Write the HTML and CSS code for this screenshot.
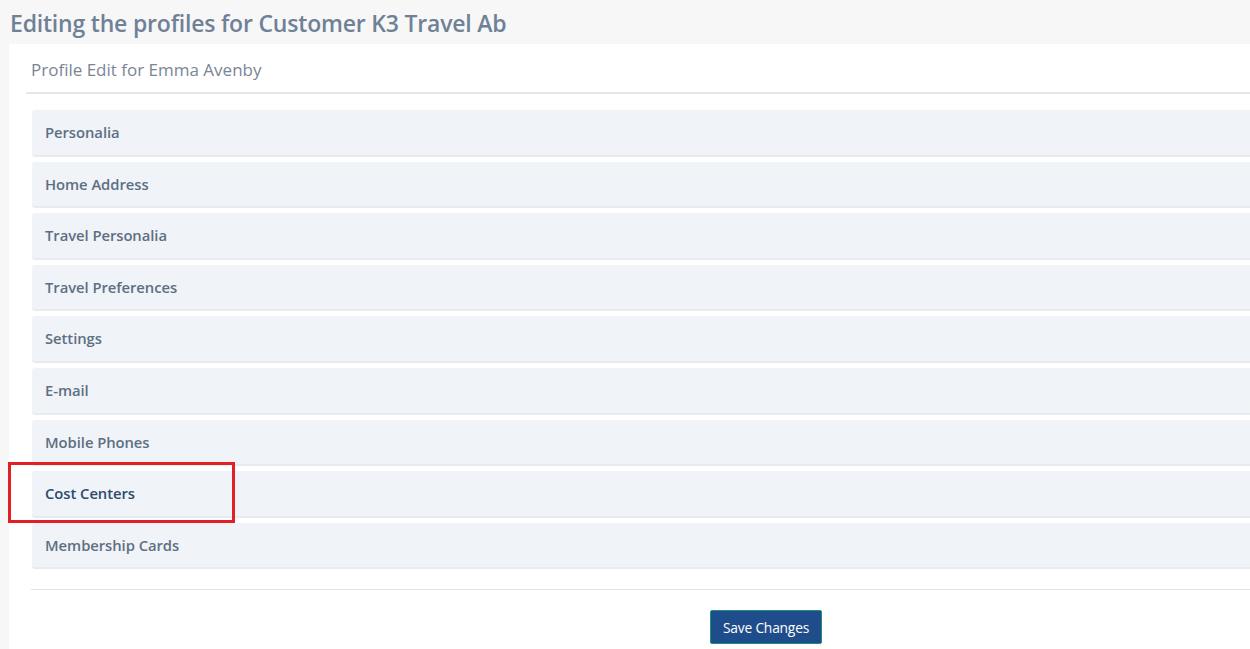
FILE: index.html
```html
<!DOCTYPE html>
<html>
<head>
<meta charset="utf-8">
<link rel="stylesheet" href="styles.css">
</head>
<body>
<div class="page">
  <h1 class="title">Editing the profiles for Customer K3 Travel Ab</h1>
  <div class="panel">
    <div class="panel-head">Profile Edit for Emma Avenby</div>
    <div class="sections">
      <div class="row">Personalia</div>
      <div class="row">Home Address</div>
      <div class="row">Travel Personalia</div>
      <div class="row">Travel Preferences</div>
      <div class="row">Settings</div>
      <div class="row">E-mail</div>
      <div class="row">Mobile Phones</div>
      <div class="row active">Cost Centers</div>
      <div class="row">Membership Cards</div>
    </div>
    <div class="footer">
      <button class="save">Save Changes</button>
    </div>
  </div>
  <div class="highlight"></div>
</div>
</body>
</html>
```
FILE: styles.css
```css
html, body {
  margin: 0;
  padding: 0;
  background: #f7f7f7;
  overflow: hidden;
}
.page {
  position: relative;
  width: 1250px;
  height: 649px;
  overflow: hidden;
  font-family: "Open Sans", "Noto Sans", sans-serif;
}
.title {
  margin: 0;
  height: 44px;
  box-sizing: border-box;
  padding: 6px 0 0 10px;
  font-size: 23px;
  font-weight: 600;
  color: #6f8196;
  letter-spacing: -0.2px;
  line-height: 34px;
  white-space: nowrap;
}
.panel {
  margin-left: 9px;
  background: #ffffff;
  height: 605px;
  width: 1600px;
  padding: 0 0 0 17px;
}
.panel-head {
  height: 50px;
  box-sizing: border-box;
  border-bottom: 2px solid #e4e8ed;
  padding: 14px 0 0 5px;
  font-size: 17px;
  color: #7a8594;
  line-height: 24px;
}
.sections {
  padding: 16px 0 0 6px;
}
.row {
  height: 44.6px;
  box-sizing: content-box;
  margin-bottom: 5px;
  background: #f0f3f7;
  border-bottom: 2px solid #e7eaee;
  border-radius: 3px 0 0 3px;
  padding-left: 13px;
  font-size: 14.8px;
  font-weight: 600;
  color: #5d6f84;
  line-height: 45px;
  letter-spacing: -0.05px;
}
.row.active {
  color: #2d4b6c;
}
.footer {
  margin: 20px 0 0 5px;
  border-top: 1px solid #e2e2e2;
  padding-top: 20px;
  display: flex;
  justify-content: center;
  width: 1470px;
}
.save {
  width: 112px;
  height: 34px;
  background: #1f4d8b;
  border: 1px solid #20907c;
  border-radius: 2px;
  color: #ffffff;
  font-family: "Open Sans", sans-serif;
  font-size: 13.8px;
  letter-spacing: -0.2px;
  padding: 0;
}
.highlight {
  position: absolute;
  left: 8px;
  top: 462px;
  width: 221px;
  height: 55px;
  border: 3px solid #e31e24;
}
```
